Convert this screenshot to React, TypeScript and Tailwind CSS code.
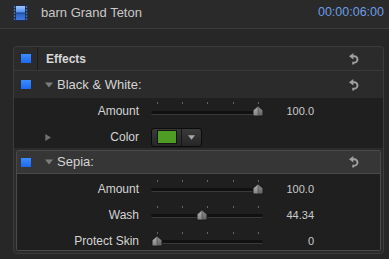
import React from "react";

function FilmIcon() {
  return (
    <svg width="15" height="16" viewBox="0 0 15 16">
      <defs>
        <linearGradient id="fg" x1="0" y1="0" x2="0" y2="1">
          <stop offset="0" stopColor="#9cc4ff" />
          <stop offset="0.48" stopColor="#4f8cf0" />
          <stop offset="0.52" stopColor="#2a5fc4" />
          <stop offset="1" stopColor="#3f7ae0" />
        </linearGradient>
      </defs>
      <rect x="0" y="0" width="15" height="16" rx="1" fill="#1c2c4a" />
      <rect x="3" y="1" width="9" height="14" fill="url(#fg)" />
      <rect x="3" y="7.5" width="9" height="1" fill="#1d3f80" />
      {[1.5, 4.5, 7.5, 10.5, 13.5].map((y) => (
        <React.Fragment key={y}>
          <rect x="0.8" y={y} width="1.4" height="1.2" fill="#6d8fc4" />
          <rect x="12.8" y={y} width="1.4" height="1.2" fill="#6d8fc4" />
        </React.Fragment>
      ))}
    </svg>
  );
}

function ResetIcon() {
  return (
    <svg width="10" height="12" viewBox="0 0 10 12">
      <polygon points="0,3.2 4.4,0 4.4,6.4" fill="#a0a0a0" />
      <path d="M4 3.2 H5.3 A3.2 3.2 0 0 1 5.3 9.6 H4.2 V11.5" fill="none" stroke="#a0a0a0" strokeWidth="1.9" />
    </svg>
  );
}

function BlueSquare() {
  return <div className="w-[10px] h-[9px] bg-gradient-to-b from-[#3b8cff] to-[#1c68f2] shrink-0" />;
}

function TriDown() {
  return (
    <svg width="8" height="6" viewBox="0 0 8 6" className="shrink-0">
      <polygon points="0,0.5 8,0.5 4,5.5" fill="#7c7c7c" />
    </svg>
  );
}

function TriRight() {
  return (
    <svg width="6" height="7" viewBox="0 0 6 7" className="shrink-0">
      <polygon points="0.3,0 6,3.5 0.3,7" fill="#6f6f6f" />
    </svg>
  );
}

function Thumb() {
  return (
    <svg width="12" height="12" viewBox="0 0 12 12">
      <defs>
        <linearGradient id="tl" x1="0" y1="0" x2="0" y2="1">
          <stop offset="0" stopColor="#b0b0b0" />
          <stop offset="1" stopColor="#858585" />
        </linearGradient>
        <linearGradient id="tr" x1="0" y1="0" x2="0" y2="1">
          <stop offset="0" stopColor="#8c8c8c" />
          <stop offset="1" stopColor="#646464" />
        </linearGradient>
      </defs>
      <polygon points="6,0.5 11.5,5 11.5,11.5 0.5,11.5 0.5,5" fill="#1a1a1a" />
      <polygon points="6,1.5 1.5,5.3 1.5,10.5 6,10.5" fill="url(#tl)" />
      <polygon points="6,1.5 10.5,5.3 10.5,10.5 6,10.5" fill="url(#tr)" />
      <rect x="5.6" y="1.5" width="0.8" height="9" fill="#555" />
    </svg>
  );
}

function Slider({ value, trackTop }: { value: number; trackTop: "a" | "b" }) {
  const pos = (v: number) => 5.5 + (v / 100) * 101.5;
  return (
    <div className="relative w-[112px] h-[18px] shrink-0">
      {[0, 25, 50, 75, 100].map((t) => (
        <div key={t} className="absolute top-0 w-px h-[2px] bg-[#666666]" style={{ left: Math.round(pos(t)) }} />
      ))}
      <div
        className={
          trackTop === "a"
            ? "absolute left-0 right-0 top-[9px] h-[4px] rounded-full bg-[#111111] border-b border-[#3a3a3a]"
            : "absolute left-0 right-0 top-[8px] h-[4px] rounded-full bg-[#111111] border-b border-[#3a3a3a]"
        }
      />
      <div className="absolute top-[3px]" style={{ left: Math.round(pos(value) - 6) }}>
        <Thumb />
      </div>
    </div>
  );
}

function SepiaRow({ label, value, display }: { label: string; value: number; display: string }) {
  return (
    <div className="flex items-center h-[18px]">
      <span className="w-[122px] text-right text-[12px] text-[#d4d4d4] shrink-0">{label}</span>
      <div className="ml-[12px]">
        <Slider value={value} trackTop="b" />
      </div>
      <span className="w-[51px] text-right text-[11px] text-[#cacaca]">{display}</span>
    </div>
  );
}

export default function App() {
  return (
    <div className="w-[389px] h-[259px] bg-[#272727] overflow-hidden font-['Liberation_Sans',Arial,sans-serif]">
      <header className="h-[29px] flex items-center pb-[3px] pl-[13px] pr-[5px] bg-[#2a2a2a] border-b border-[#3b3b3b]">
        <FilmIcon />
        <span className="ml-[13px] text-[13px] text-[#c8c8c8]">barn Grand Teton</span>
        <span className="ml-auto text-[12.5px] text-[#6c9de6]">00:00:06:00</span>
      </header>

      <div className="mt-[17px] ml-[13px] w-[371px] h-[208px] rounded-[4px] border border-[#3b3b3b] bg-[#2b2b2b] overflow-hidden flex flex-col">
        {/* Effects row */}
        <div className="h-[24px] flex items-stretch border-b border-[#393939] shrink-0">
          <div className="w-[24px] border-r border-[#1c1c1c] flex items-center pl-[7px]">
            <BlueSquare />
          </div>
          <div className="flex-1 flex items-center pl-[8px] pr-[24px]">
            <span className="text-[12px] font-bold text-[#d8d8d8]">Effects</span>
            <span className="ml-auto flex">
              <ResetIcon />
            </span>
          </div>
        </div>

        {/* Black & White header */}
        <div className="h-[27px] flex items-center pl-[7px] pr-[24px] shrink-0">
          <BlueSquare />
          <span className="ml-[14px] flex">
            <TriDown />
          </span>
          <span className="ml-[4px] text-[13px] text-[#d4d4d4]">Black &amp; White:</span>
          <span className="ml-auto flex">
            <ResetIcon />
          </span>
        </div>

        {/* Black & White content */}
        <div className="h-[50px] bg-[#1f1f1f] flex flex-col pt-[4px] gap-[7px] shrink-0">
          <div className="flex items-center h-[18px]">
            <span className="w-[125px] text-right text-[12px] text-[#d4d4d4] shrink-0">Amount</span>
            <div className="ml-[12px]">
              <Slider value={100} trackTop="a" />
            </div>
            <span className="w-[51px] text-right text-[11px] text-[#cacaca]">100.0</span>
          </div>
          <div className="flex items-center h-[20px]">
            <div className="w-[125px] flex items-center pl-[31px] shrink-0">
              <TriRight />
              <span className="ml-auto text-[12px] text-[#d4d4d4]">Color</span>
            </div>
            <div className="ml-[12px] w-[51px] h-[19px] rounded-[3px] border border-[#0c0c0c] bg-gradient-to-b from-[#3a3a3a] to-[#262626] flex items-stretch">
              <div className="w-[30px] flex items-center pl-[5px] border-r border-[#151515]">
                <div className="w-[20px] h-[14px] border border-[#151515] bg-[#4f9c25]" />
              </div>
              <div className="flex-1 flex items-center justify-center">
                <svg width="7" height="5" viewBox="0 0 7 5">
                  <polygon points="0,0.3 7,0.3 3.5,4.8" fill="#a8a8a8" />
                </svg>
              </div>
            </div>
          </div>
        </div>

        {/* Sepia section */}
        <div className="flex-1 pt-[2px] pl-[2px] pr-[2px] pb-[2px]">
          <div className="h-[101px] rounded-[2px] border border-[#4a4a4a] overflow-hidden flex flex-col">
            <div className="h-[23px] bg-[#363636] border-b border-[#4a4a4a] flex items-center pl-[4px] pr-[21px] shrink-0">
              <BlueSquare />
              <span className="ml-[14px] flex">
                <TriDown />
              </span>
              <span className="ml-[4px] text-[13px] text-[#d4d4d4]">Sepia:</span>
              <span className="ml-auto flex">
                <ResetIcon />
              </span>
            </div>
            <div className="flex-1 bg-[#1f1f1f] flex flex-col pt-[6px] gap-[8px]">
              <SepiaRow label="Amount" value={100} display="100.0" />
              <SepiaRow label="Wash" value={44.34} display="44.34" />
              <SepiaRow label="Protect Skin" value={0} display="0" />
            </div>
          </div>
        </div>
      </div>
    </div>
  );
}
